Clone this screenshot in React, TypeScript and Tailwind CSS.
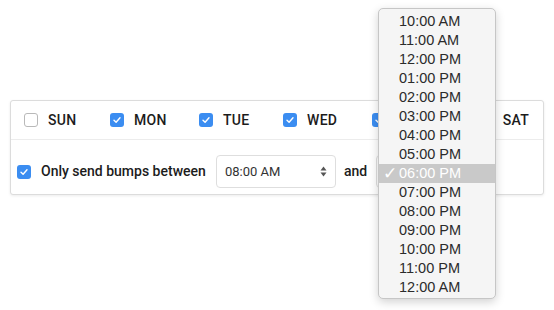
import React from "react";

const days = [
  { label: "SUN", checked: false, width: "w-[86px]" },
  { label: "MON", checked: true, width: "w-[89px]" },
  { label: "TUE", checked: true, width: "w-[84px]" },
  { label: "WED", checked: true, width: "w-[89px]" },
  { label: "THU", checked: true, width: "w-[60px]" },
];

const times = [
  "10:00 AM",
  "11:00 AM",
  "12:00 PM",
  "01:00 PM",
  "02:00 PM",
  "03:00 PM",
  "04:00 PM",
  "05:00 PM",
  "06:00 PM",
  "07:00 PM",
  "08:00 PM",
  "09:00 PM",
  "10:00 PM",
  "11:00 PM",
  "12:00 AM",
];

function Checkbox({ checked }: { checked: boolean }) {
  if (!checked) {
    return (
      <span className="inline-block h-[14px] w-[14px] shrink-0 rounded-[3px] border border-[#b9b9b9] bg-white" />
    );
  }
  return (
    <span className="flex h-[14px] w-[14px] shrink-0 items-center justify-center rounded-[3px] bg-[#3b8df1]">
      <svg width="10" height="10" viewBox="0 0 10 10" fill="none">
        <path d="M2 5.2 L4.1 7.3 L8 2.8" stroke="white" strokeWidth="1.4" strokeLinecap="round" strokeLinejoin="round" />
      </svg>
    </span>
  );
}

function Day({ label, checked, className = "" }: { label: string; checked: boolean; className?: string }) {
  return (
    <label className={`flex items-center gap-[10px] ${className}`}>
      <Checkbox checked={checked} />
      <span className="text-[14px] font-medium tracking-[0.3px] text-[#1c1c1c]">{label}</span>
    </label>
  );
}

function Select({ value, open = false }: { value: string; open?: boolean }) {
  return (
    <div className="flex h-[33px] w-[120px] items-center justify-between rounded-[4px] border border-[#dedede] bg-white pl-[8px] pr-[8px]">
      {/* while the menu is open it sits on top of the value */}
      <span className={`text-[13px] text-[#333] ${open ? "invisible" : ""}`}>{value}</span>
      <svg width="7" height="11" viewBox="0 0 7 11">
        <path d="M3.5 0.5 L6.5 4.5 H0.5 Z" fill="#555" />
        <path d="M3.5 10.5 L6.5 6.5 H0.5 Z" fill="#555" />
      </svg>
    </div>
  );
}

function TimeMenu({ selected }: { selected: string }) {
  return (
    <div
      className="absolute left-[2px] top-[-147px] z-10 w-[118px] rounded-[5px] border border-[#c6c6c6] bg-[#f5f5f5] pb-[1px] pt-[3px] shadow-[0_3px_10px_rgba(0,0,0,0.18)]"
      style={{ fontFamily: '"Liberation Sans", Arial, sans-serif' }}
    >
      {times.map((t) => {
        const active = t === selected;
        return (
          <div
            key={t}
            className={`flex h-[19px] items-center text-[14.5px] leading-none ${
              active ? "bg-[#c9c9c9] text-white" : "text-[#2b2b2b]"
            }`}
          >
            <span className="w-[20px] pl-[4px] text-[17px]" style={{ fontFamily: '"DejaVu Sans", sans-serif' }}>
              {active ? "✓" : ""}
            </span>
            <span>{t}</span>
          </div>
        );
      })}
    </div>
  );
}

export default function App() {
  return (
    <div
      className="min-h-[310px] w-[554px] bg-white px-[10px] pt-[100px]"
      style={{ fontFamily: 'Roboto, "Noto Sans", sans-serif' }}
    >
      <div className="w-[534px] rounded-[3px] border border-[#dcdcdc] bg-white shadow-[0_1px_3px_rgba(0,0,0,0.08)]">
        <div className="flex h-[39px] items-center border-b border-[#ececec] pl-[13px] pr-[14px]">
          {days.map((d) => (
            <Day key={d.label} label={d.label} checked={d.checked} className={d.width} />
          ))}
          <div className="ml-auto">
            <Day label="SAT" checked={false} />
          </div>
        </div>
        <div className="flex items-center pb-[6px] pl-[6px] pt-[15px]">
          <Checkbox checked={true} />
          <span className="ml-[10px] w-[166px] whitespace-nowrap text-[14px] font-medium text-[#1c1c1c]">
            Only send bumps between
          </span>
          <div className="ml-[9px]">
            <Select value="08:00 AM" />
          </div>
          <span className="ml-[8px] w-[23px] text-[14px] font-medium text-[#1c1c1c]">and</span>
          <div className="relative ml-[9px]">
            <Select value="06:00 PM" open />
            <TimeMenu selected="06:00 PM" />
          </div>
        </div>
      </div>
    </div>
  );
}
